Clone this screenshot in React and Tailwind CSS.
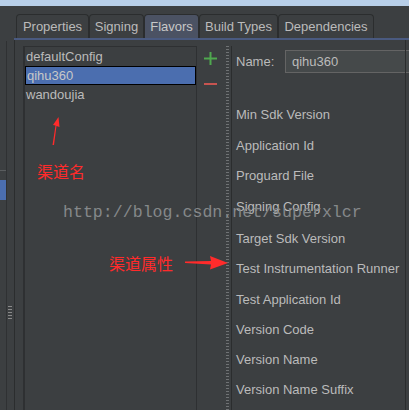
export default function App() {
  const font = { fontFamily: '"Liberation Sans", Arial, sans-serif' };
  const tabs = [
    { t: "Properties", w: "w-[73px]" },
    { t: "Signing", w: "w-[55px]" },
    { t: "Flavors", w: "w-[55px]", sel: true },
    { t: "Build Types", w: "w-[79px]" },
    { t: "Dependencies", w: "w-[96px]" },
  ];
  const labels = [
    ["Min Sdk Version", "h-[31px]"],
    ["Application Id", "h-[30px]"],
    ["Proguard File", "h-[31px]"],
    ["Signing Config", "h-[32px]"],
    ["Target Sdk Version", "h-[30px]"],
    ["Test Instrumentation Runner", "h-[31px]"],
    ["Test Application Id", "h-[30px]"],
    ["Version Code", "h-[30px]"],
    ["Version Name", "h-[30px]"],
    ["Version Name Suffix", "h-[30px]"],
  ];
  return (
    <div
      className="relative w-[409px] h-[410px] overflow-hidden bg-[#3c3f41] flex flex-col text-[13px] text-[#bbbbbb]"
      style={font}
    >
      <div className="h-[6px] shrink-0 bg-[#b8cfe8]" />
      <div className="flex flex-1 min-h-0">
        {/* left sidebar */}
        <div className="w-[14px] shrink-0 flex">
          <div className="w-[7px] flex flex-col pt-[35px]">
            <div className="flex-1 flex flex-col border-r border-[#2f3133]">
              <div className="h-[129px]" />
              <div className="h-px bg-[#5a5d5f]" />
              <div className="h-[9px]" />
              <div className="h-[20px] bg-[#4b6eaf]" />
            </div>
          </div>
          <div className="w-[7px] flex flex-col justify-end pb-[90px] pl-[1px]">
            <div className="w-[4px] h-[14px] bg-[repeating-linear-gradient(#8a8a8a_0_1px,transparent_1px_3px)]" />
          </div>
        </div>
        {/* main */}
        <div className="flex-1 flex flex-col min-w-0">
          <div className="h-[8px] shrink-0" />
          <div className="h-[24px] shrink-0 flex pl-[2px]">
            {tabs.map((tab) => (
              <div
                key={tab.t}
                className={`${tab.w} shrink-0 flex items-center justify-center rounded-t-[4px] border border-b-0 border-[#2b2d2e] ${
                  tab.sel ? "bg-[#4b5263] text-[#c8c8c8]" : "bg-[#3c3f41]"
                }`}
              >
                {tab.t}
              </div>
            ))}
          </div>
          <div className="h-[2px] shrink-0 bg-[#4a5a80]" />
          <div className="flex-1 flex border-l border-[#2b2d2e] min-h-0">
            <div className="w-[8px] shrink-0" />
            {/* list */}
            <div className="mt-[6px] w-[174px] shrink-0 border-l-2 border-t border-r border-[#2e3032] flex flex-col">
              <div className="h-[19px] flex items-center pl-[1px]">defaultConfig</div>
              <div className="h-[19px] flex items-center pl-[1px] bg-[#4b6eaf] border border-black text-[#c8c8c8]">
                qihu360
              </div>
              <div className="h-[19px] flex items-center pl-[1px]">wandoujia</div>
            </div>
            {/* plus minus */}
            <div className="w-[29px] shrink-0 flex flex-col items-center pt-[12px] pr-[3px]">
              <svg width="13" height="13" viewBox="0 0 13 13">
                <rect x="5.5" y="0" width="2" height="13" fill="#4fa84f" />
                <rect x="0" y="5.5" width="13" height="2" fill="#4fa84f" />
              </svg>
              <div className="mt-[18px] w-[13px] h-[2px] bg-[#c75450]" />
            </div>
            {/* splitter */}
            <div className="mt-[6px] w-[3px] shrink-0 bg-[repeating-linear-gradient(#6f7274_0_1px,transparent_1px_3px)]" />
            <div className="w-[2px] shrink-0" />
            <div className="mt-[6px] w-px shrink-0 bg-[#2b2d2e]" />
            {/* right panel */}
            <div className="flex-1 flex flex-col pl-[4px] min-w-0">
              <div className="mt-[10px] h-[23px] flex items-center">
                <div className="w-[49px] shrink-0">Name:</div>
                <div className="flex-1 h-[23px] -mr-[10px] bg-[#45494a] border border-[#646464] flex items-center pl-[6px]">
                  qihu360
                </div>
              </div>
              <div className="h-[27px]" />
              {labels.map(([l, h]) => (
                <div key={l} className={`${h} shrink-0 flex items-start whitespace-nowrap`}>
                  <span className="leading-[30px]">{l}</span>
                </div>
              ))}
            </div>
            <div className="w-px shrink-0 bg-[#2b2d2e] ml-[1px] mr-[3px]" />
          </div>
        </div>
      </div>

      {/* watermark */}
      <div
        className="absolute left-[63px] top-[201px] text-[16.6px] text-[#85888a] whitespace-nowrap"
        style={{ fontFamily: '"Liberation Mono", "Courier New", monospace' }}
      >
        http://blog.csdn.net/superxlcr
      </div>

      {/* annotations */}
      <div
        className="absolute left-[37px] top-[159px] text-[16px] text-[#ff2b2b] whitespace-nowrap"
        style={{ fontFamily: '"Noto Sans CJK SC", sans-serif' }}
      >
        渠道名
      </div>
      <div
        className="absolute left-[109px] top-[251px] text-[16px] text-[#ff2b2b] whitespace-nowrap"
        style={{ fontFamily: '"Noto Sans CJK SC", sans-serif' }}
      >
        渠道属性
      </div>
      <svg className="absolute left-0 top-0" width="409" height="410" viewBox="0 0 409 410">
        <polygon points="52.5,145 54,145 56.5,126 59.5,127 58.5,117 53,125 55.5,125.5" fill="#ff2b2b" />
        <polygon points="185,261.5 211,261 210,256 228,263 210,269.5 211,264.5 185,263" fill="#ff2b2b" />
      </svg>
    </div>
  );
}
